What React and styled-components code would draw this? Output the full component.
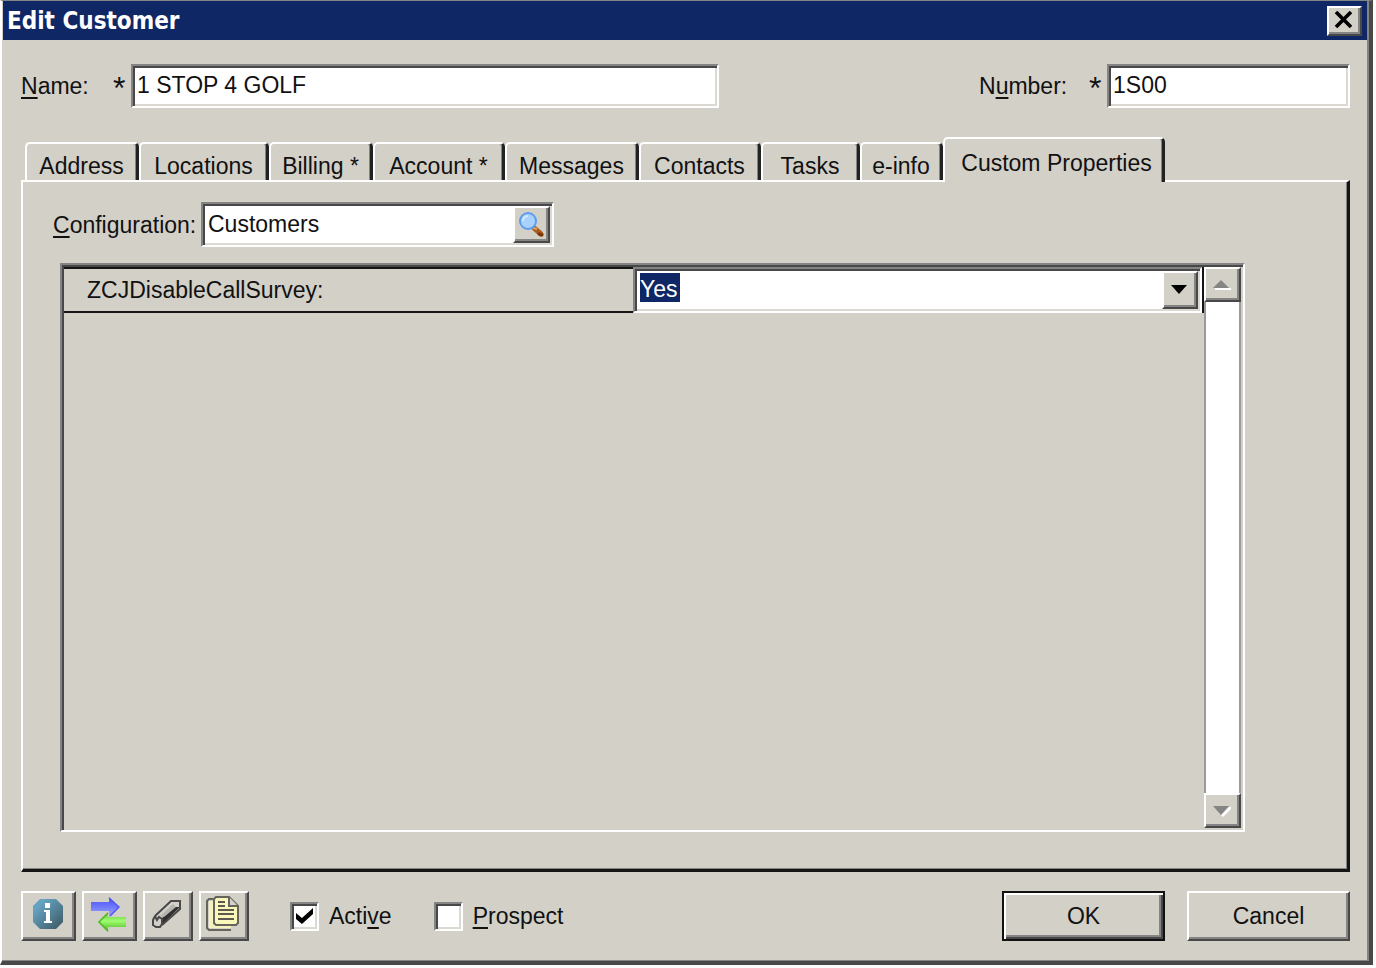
import { useState } from 'react';
import styled, { createGlobalStyle, css } from 'styled-components';

const GlobalStyle = createGlobalStyle`
    * {
        box-sizing: border-box;
    }
    body {
        margin: 0;
        background: #fbfbfb;
    }
    body, input, select, button {
        font-family: "Liberation Sans", Arial, sans-serif;
        font-size: 23px;
        line-height: 32px;
        color: #111;
    }
    u {
        text-decoration-thickness: 2px;
        text-underline-offset: 3px;
        text-decoration-skip-ink: none;
    }
`;

const sunken = css`
    border: 2px solid;
    border-color: #848484 #fff #fff #848484;
    box-shadow: inset 2px 2px #484848, inset -2px -2px #dcd9d2;
`;

const raised = css`
    border: 2px solid;
    border-color: #fff #484848 #484848 #fff;
    box-shadow: inset -2px -2px #848484;
    background: #d3d0c8;
`;

const Window = styled.div`
    display: flex;
    flex-flow: column nowrap;
    min-height: calc(100vh - 3px);
    margin: 0 3px 3px 0;
    border: solid;
    border-width: 1px 4px 4px 2px;
    border-color: #848484 #484848 #484848 #fff;
    box-shadow: inset -2px -1px #848484;
    padding: 0 2px 1px 1px;
    background: #d3d0c8;
`;

const TitleBar = styled.header`
    display: flex;
    justify-content: space-between;
    align-items: center;
    height: 39px;
    padding: 0 5px 0 4px;
    background: #102766;
`;

const Title = styled.h1`
    margin: 0;
    font-family: "DejaVu Sans Condensed", "DejaVu Sans", sans-serif;
    font-size: 24px;
    font-weight: bold;
    color: #fff;
`;

const CloseButton = styled.button`
    ${raised}
    display: flex;
    justify-content: center;
    align-items: center;
    width: 35px;
    height: 30px;
    padding: 0 2px 2px 0;
`;

const Form = styled.form`
    display: flex;
    flex-flow: column nowrap;
    flex: 1;
    padding: 24px 17px 19px 18px;
`;

const Header = styled.div`
    display: flex;
    justify-content: space-between;
`;

const Field = styled.div`
    display: flex;
    align-items: center;
    flex: 0 1 ${props => props.$basis}px;
`;

const Required = styled.span`
    width: 18px;
    margin-left: auto;
    padding-top: 4px;
    font-size: 32px;
    text-align: left;
`;

const TextInput = styled.input`
    ${sunken}
    flex: 0 1 ${props => props.$basis}px;
    min-width: 0;
    height: 44px;
    padding: 0 4px 2px;
    background: #fff;
    outline: none;
`;

const TabList = styled.div`
    display: flex;
    align-items: flex-end;
    margin-top: 29px;
    padding-left: 4px;
`;

const Tab = styled.button`
    flex: 0 1 ${props => props.$basis}px;
    height: 38px;
    padding: 6px 0 0;
    border: solid;
    border-width: 2px 3px 0 2px;
    border-color: #fff #222 #222 #fff;
    border-radius: 5px 5px 0 0;
    box-shadow: inset -1px 0 #848484;
    background: #d3d0c8;
    white-space: nowrap;

    ${props => props.$selected && css`
        position: relative;
        z-index: 1;
        height: 45px;
        margin-bottom: -2px;
        padding: 6px 0 2px 6px;
    `}
`;

const Panel = styled.section`
    display: flex;
    flex-flow: column nowrap;
    flex: 1;
    border: solid;
    border-width: 2px 3px 3px 2px;
    border-color: #fff #151515 #151515 #fff;
    box-shadow: inset -1px -1px #848484;
    padding: 20px 102px 37px 37px;
`;

const Configuration = styled.div`
    display: flex;
    align-items: center;
    margin: 0 0 16px -7px;
`;

const ConfigurationLabel = styled.label`
    flex: 0 0 148px;
`;

const Lookup = styled.div`
    ${sunken}
    display: flex;
    flex: 0 1 353px;
    min-width: 0;
    height: 45px;
    padding: 2px;
    background: #fff;
`;

const LookupInput = styled.input`
    flex: 1;
    min-width: 0;
    padding: 0 3px 2px;
    border: none;
    background: none;
    outline: none;
`;

const LookupButton = styled.button`
    ${raised}
    display: flex;
    justify-content: center;
    align-items: center;
    flex: 0 0 37px;
    padding: 0;
`;

const PropertyList = styled.div`
    ${sunken}
    display: flex;
    flex: 1;
    padding: 2px;
    box-shadow: inset 2px 2px #484848;
`;

const Properties = styled.div`
    flex: 1;
`;

const Property = styled.div`
    display: grid;
    grid-template-columns: 1fr 1fr;
    height: 46px;
    border-right: 2px solid #151515;
`;

const PropertyLabel = styled.label`
    display: flex;
    align-items: center;
    padding-left: 23px;
    border-top: 2px solid #151515;
    border-bottom: 2px solid #151515;
`;

const Combo = styled.div`
    position: relative;
    display: flex;
`;

/* the gradient is the highlight behind the selected value */
const ComboSelect = styled.select`
    ${sunken}
    appearance: none;
    flex: 1;
    min-width: 0;
    padding: 0 44px 2px 5px;
    border-radius: 0;
    background: linear-gradient(#102766, #102766) 5px 4px / 40px 29px no-repeat #fff;
    color: #fff;
    outline: none;

    option {
        color: #111;
    }
`;

const ComboArrow = styled.span`
    ${raised}
    position: absolute;
    top: 4px;
    right: 4px;
    bottom: 4px;
    display: flex;
    justify-content: center;
    align-items: center;
    width: 36px;
    padding: 0 2px 2px 0;
    pointer-events: none;
`;

const ScrollBar = styled.div`
    display: flex;
    flex-flow: column nowrap;
    justify-content: space-between;
    width: 37px;
    border-left: 2px solid #9a9a98;
    background: #fff;
    box-shadow: inset -2px 0 #9a9a98;
`;

const ScrollButton = styled.button`
    ${raised}
    display: flex;
    justify-content: center;
    align-items: center;
    width: 37px;
    height: 35px;
    margin-left: -2px;
    padding: 0;
`;

const Footer = styled.footer`
    display: flex;
    align-items: center;
    margin-top: 19px;
`;

const ToolBar = styled.div`
    display: flex;
    gap: 6px;
    margin-right: 41px;
`;

const ToolButton = styled.button`
    ${raised}
    display: flex;
    justify-content: center;
    align-items: center;
    width: ${props => (props.$wide ? 55 : 50)}px;
    height: 50px;
    padding: 0 2px 4px 0;
`;

const Check = styled.label`
    display: flex;
    align-items: center;
    gap: 10px;
    margin-right: 42px;
`;

const CheckBox = styled.input`
    ${sunken}
    appearance: none;
    display: grid;
    place-items: center;
    width: 29px;
    height: 29px;
    margin: 0;
    background: #fff;

    &:checked::before {
        content: "";
        width: 17px;
        height: 16px;
        background: #000;
        clip-path: polygon(0 31%, 35% 62%, 100% 0, 100% 38%, 35% 100%, 0 69%);
    }
`;

const Actions = styled.div`
    display: flex;
    gap: 22px;
    margin-left: auto;
`;

const ActionButton = styled.button`
    ${raised}
    width: 163px;
    height: 50px;
    padding: 0;

    ${props => props.$primary && css`
        border-color: #111;
        box-shadow: inset 2px 2px #fff, inset -2px -2px #484848, inset -4px -4px #848484;
    `}
`;

const CloseIcon = () => (
  <svg width="19" height="17" viewBox="0 0 19 17">
    <path d="M2 1L17 16M17 1L2 16" stroke="#000" strokeWidth="3.6" />
  </svg>
);

const SearchIcon = () => (
  <svg width="27" height="27" viewBox="0 0 27 27">
    <path d="M16 17L23 23" stroke="#a75a1c" strokeWidth="5" strokeLinecap="round" />
    <path d="M21 23L24 24" stroke="#7d3508" strokeWidth="3" strokeLinecap="round" />
    <path d="M15 17L19 18" stroke="#e0a765" strokeWidth="2" />
    <circle cx="10" cy="10" r="8" fill="#a9d2fb" stroke="#5d9df0" strokeWidth="2" />
    <path d="M5 10a5 5 0 0 1 5-5" stroke="#d3eaff" strokeWidth="2" fill="none" />
  </svg>
);

const InfoIcon = () => (
  <svg width="32" height="32" viewBox="0 0 32 32">
    <defs>
      <linearGradient id="info" x1="0" y1="0" x2="1" y2="1">
        <stop offset="0.2" stopColor="#65a3c2" />
        <stop offset="1" stopColor="#3c5660" />
      </linearGradient>
    </defs>
    <path d="M8 1H24L31 8V24L24 31H8L1 24V8Z" fill="url(#info)" />
    <path d="M13 5H18V10H13ZM12 12H18V23H20V25H12V23H14V14H12Z" fill="#fff" />
  </svg>
);

const TransferIcon = () => (
  <svg width="38" height="38" viewBox="0 0 38 38">
    <defs>
      <linearGradient id="blue" x1="0" y1="0" x2="0" y2="1">
        <stop offset="0" stopColor="#4a50f5" />
        <stop offset="0.5" stopColor="#6f79fa" />
        <stop offset="1" stopColor="#a9adf8" />
      </linearGradient>
      <linearGradient id="green" x1="0" y1="0" x2="0" y2="1">
        <stop offset="0" stopColor="#5cc52c" />
        <stop offset="0.45" stopColor="#a0fb72" />
        <stop offset="1" stopColor="#43b614" />
      </linearGradient>
    </defs>
    <path d="M1 7H19V2L29 12L19 22V16H1Z" fill="url(#blue)" />
    <path d="M19 3L29 12L20 21" stroke="#5358f4" strokeWidth="1.5" fill="none" />
    <path d="M36 22H18V17L8 27L18 37V32H36Z" fill="url(#green)" />
    <path d="M18 18L9 27L18 36" stroke="#4fb924" strokeWidth="1.5" fill="none" />
  </svg>
);

const EraserIcon = () => (
  <svg width="30" height="30" viewBox="0 0 30 30">
    <path d="M3 17L19 2H28V10L9 27Z" fill="#d3d0c8" />
    <path d="M10 19L22 8H28L10 26Z" fill="#303030" />
    <path d="M8 17L21 5L24 8L12 18Z" fill="#b5b3ae" />
    <path d="M3 17L19 2H28V10L10 26" stroke="#494949" strokeWidth="2" fill="none" />
    <path d="M3 17L1 21V26L4 28H8L10 25V20L7 18L5 21L3 17" stroke="#494949" strokeWidth="2" fill="none" />
  </svg>
);

const NotesIcon = () => (
  <svg width="34" height="36" viewBox="0 0 34 36">
    <path d="M7 3H3L1 5V32L3 34H25" fill="none" stroke="#65655e" strokeWidth="2" />
    <path d="M3 5H7V29H25V32H3Z" fill="#f5f3bd" />
    <path d="M10 1H23L32 10V27L30 29H10L8 27V3Z" fill="#faf7bb" stroke="#65655e" strokeWidth="2" />
    <path d="M23 1V10H32" fill="#d3d0c8" stroke="#65655e" strokeWidth="2" />
    <path d="M12 6H19M12 10H19M12 14H28M12 18H28M12 23H28" stroke="#5c5b50" strokeWidth="2" />
  </svg>
);

const UpIcon = () => (
  <svg width="19" height="12" viewBox="0 0 19 12">
    <path d="M2 9H18V11H2Z" fill="#fff" />
    <path d="M0 9L8 1L16 9Z" fill="#848484" />
  </svg>
);

const DownIcon = () => (
  <svg width="19" height="12" viewBox="0 0 19 12">
    <path d="M16 2H18V4L10 12L8 10Z" fill="#fff" />
    <path d="M0 1H16L8 10Z" fill="#848484" />
  </svg>
);

const ArrowIcon = () => (
  <svg width="16" height="9" viewBox="0 0 16 9">
    <path d="M0 0H16L8 9Z" fill="#000" />
  </svg>
);

const tabs = [
  { title: 'Address', basis: 114 },
  { title: 'Locations', basis: 130 },
  { title: 'Billing *', basis: 104 },
  { title: 'Account *', basis: 132 },
  { title: 'Messages', basis: 134 },
  { title: 'Contacts', basis: 122 },
  { title: 'Tasks', basis: 99 },
  { title: 'e-info', basis: 83 },
  { title: 'Custom Properties', basis: 222 }
];

export default function App() {
  const [selected, setSelected] = useState('Custom Properties');

  return (
    <Window>
      <GlobalStyle />

      <TitleBar>
        <Title>Edit Customer</Title>
        <CloseButton type="button" aria-label="Close"><CloseIcon /></CloseButton>
      </TitleBar>

      <Form onSubmit={event => event.preventDefault()}>
        <Header>
          <Field $basis={698}>
            <label htmlFor="name"><u>N</u>ame:</label>
            <Required>*</Required>
            <TextInput id="name" $basis={588} defaultValue="1 STOP 4 GOLF" />
          </Field>
          <Field $basis={371}>
            <label htmlFor="number">N<u>u</u>mber:</label>
            <Required>*</Required>
            <TextInput id="number" $basis={243} defaultValue="1S00" />
          </Field>
        </Header>

        <TabList role="tablist">
          {
            tabs.map(tab => {
              return (
                <Tab
                  key={tab.title}
                  type="button"
                  role="tab"
                  aria-selected={tab.title === selected}
                  $basis={tab.basis}
                  $selected={tab.title === selected}
                  onClick={() => setSelected(tab.title)}
                >
                  {tab.title}
                </Tab>
              );
            })
          }
        </TabList>

        <Panel>
          <Configuration>
            <ConfigurationLabel htmlFor="configuration"><u>C</u>onfiguration:</ConfigurationLabel>
            <Lookup>
              <LookupInput id="configuration" defaultValue="Customers" />
              <LookupButton type="button" aria-label="Search"><SearchIcon /></LookupButton>
            </Lookup>
          </Configuration>

          <PropertyList>
            <Properties>
              <Property>
                <PropertyLabel htmlFor="survey">ZCJDisableCallSurvey:</PropertyLabel>
                <Combo>
                  <ComboSelect id="survey" defaultValue="Yes">
                    <option>Yes</option>
                    <option>No</option>
                  </ComboSelect>
                  <ComboArrow><ArrowIcon /></ComboArrow>
                </Combo>
              </Property>
            </Properties>
            <ScrollBar>
              <ScrollButton type="button" aria-label="Scroll up"><UpIcon /></ScrollButton>
              <ScrollButton type="button" aria-label="Scroll down"><DownIcon /></ScrollButton>
            </ScrollBar>
          </PropertyList>
        </Panel>

        <Footer>
          <ToolBar>
            <ToolButton type="button" $wide aria-label="Information"><InfoIcon /></ToolButton>
            <ToolButton type="button" $wide aria-label="Transfer"><TransferIcon /></ToolButton>
            <ToolButton type="button" aria-label="Clear"><EraserIcon /></ToolButton>
            <ToolButton type="button" aria-label="Notes"><NotesIcon /></ToolButton>
          </ToolBar>
          <Check>
            <CheckBox type="checkbox" defaultChecked />
            <span>Acti<u>v</u>e</span>
          </Check>
          <Check>
            <CheckBox type="checkbox" />
            <span><u>P</u>rospect</span>
          </Check>
          <Actions>
            <ActionButton type="submit" $primary>OK</ActionButton>
            <ActionButton type="button">Cancel</ActionButton>
          </Actions>
        </Footer>
      </Form>
    </Window>
  );
}
